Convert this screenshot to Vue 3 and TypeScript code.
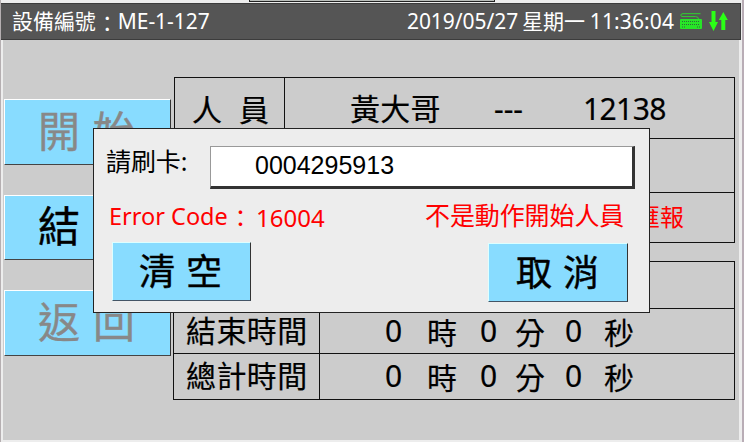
<script setup lang="ts">
interface Duration { label: string; values: { n: number; unit: string }[] }

const zero = () => [{ n: 0, unit: '時' }, { n: 0, unit: '分' }, { n: 0, unit: '秒' }]

const actions = [
  { label: '開始', enabled: false },
  { label: '結', enabled: true },
  { label: '返回', enabled: false },
]
const durations: Duration[] = [
  { label: '', values: [] },
  { label: '結束時間', values: zero() },
  { label: '總計時間', values: zero() },
]
const person = { name: '黃大哥', group: '---', id: '12138' }
const card = '0004295913'
</script>

<template>
  <div class="shell">
    <div class="outer-tab"></div>
    <header class="bar">
      <span class="device">設備編號<i class="colon">：</i>ME-1-127</span>
      <span class="date">2019/05/27</span>
      <span class="week">星期一</span>
      <span class="time">11:36:04</span>
      <svg class="keyboard" viewBox="0 0 22 16" width="22" height="16">
        <path d="M20.5 .7H3Q.8 .7 .8 2.2T3 3.6H15.5Q18.5 3.6 18.5 6" fill="none" stroke="#2fd32f" />
        <rect x="0" y="6" width="22" height="10" rx="1" fill="#27e527" />
        <path d="M2 8.5H20M2 11.5H20M2 14H5M17 14H20" stroke="#2f6b38" stroke-width="1" stroke-dasharray="1 1" />
      </svg>
      <svg class="arrows" viewBox="0 0 19 20" width="19" height="20">
        <path d="M2.5 0H6.5V11H9L4.5 20L0 11H2.5ZM12.3 19V9H9.8L14.3 1L18.8 9H16.3V19Z" fill="#2bff16" />
      </svg>
    </header>

    <main class="body">
      <nav class="actions">
        <button v-for="a in actions" :key="a.label" class="btn" :class="{ off: !a.enabled }">
          <span v-for="c in a.label" :key="c">{{ c }}</span>
        </button>
      </nav>
      <section class="tables">
        <div class="info">
          <div class="row person">
            <div class="who"><span>人</span><span>員</span></div>
            <div class="detail">
              <span class="name">{{ person.name }}</span>
              <span class="group">{{ person.group }}</span>
              <span class="id">{{ person.id }}</span>
            </div>
          </div>
          <div class="row"></div>
          <div class="row report">匯報</div>
        </div>
        <div class="times">
          <div v-for="d in durations" :key="d.label" class="trow">
            <div class="tlabel">{{ d.label }}</div>
            <div class="tval">
              <template v-for="v in d.values" :key="v.unit">
                <span class="n">{{ v.n }}</span><span class="u">{{ v.unit }}</span>
              </template>
            </div>
          </div>
        </div>
      </section>
    </main>

    <div class="dialog">
      <div class="scan">
        <label>請刷卡:</label>
        <div class="field">{{ card }}</div>
      </div>
      <div class="error">
        <span class="etitle">Error Code<i class="colon">：</i></span>
        <span class="ecode">16004</span>
        <span class="emsg">不是動作開始人員</span>
      </div>
      <div class="choices">
        <button class="btn small"><span>清</span><span>空</span></button>
        <button class="btn small cancel"><span>取</span><span>消</span></button>
      </div>
    </div>
  </div>
</template>

<style>
body { margin: 0; overflow: hidden; }
</style>

<style scoped>
.shell {
  position: relative;
  box-sizing: border-box;
  width: 744px;
  height: 442px;
  overflow: hidden;
  display: flex;
  flex-direction: column;
  background: #ededed;
  border-left: 1px solid #b5afb1;
  border-right: 2px solid #b9adb6;
  font-family: "Noto Sans", "Noto Sans CJK TC", sans-serif;
  color: #000;
  white-space: nowrap;
}
.outer-tab {
  box-sizing: border-box;
  flex: none;
  width: 246px;
  height: 2px;
  margin: 0 0 1px 248px;
  background: #b9bdb9;
  border: solid #222;
  border-width: 0 1px 1px;
}
.bar {
  box-sizing: border-box;
  flex: none;
  height: 37px;
  margin: 0 1px 0 -1px;
  display: flex;
  align-items: center;
  padding: 0 12px 1px 12px;
  background: #555;
  border: solid #3c3c3c;
  border-width: 1px 1px 1px 0;
  color: #fff;
  font-size: 21px;
  line-height: 30px;
}
.colon {
  display: inline-block;
  font-style: normal;
  line-height: 1;
  vertical-align: -2px;
  padding-left: 1px;
}
.device { flex: 1; letter-spacing: -.05px; }
.date { letter-spacing: -.05px; }
.week { margin: 0 5px 0 4px; letter-spacing: -.1px; }
.time { letter-spacing: .1px; }
.keyboard { margin: 0 7px 0 6px; }
.body {
  flex: 1;
  display: flex;
  align-items: flex-start;
  margin: 0 3px 2px 2px;
  background: #ccc;
}
.actions {
  display: flex;
  flex-direction: column;
  gap: 30px;
  padding: 59px 0 0 1px;
}
.btn {
  box-sizing: border-box;
  width: 167px;
  height: 65.5px;
  padding: 0 0 2px 33px;
  display: flex;
  align-items: center;
  gap: 13px;
  background: #88dcff;
  border: solid;
  border-width: 1px;
  border-color: #fff #333 #444 #fff;
  font-family: inherit;
  font-size: 42px;
  line-height: 50px;
  color: #000;
  -webkit-text-stroke: .4px;
}
.off { color: #888; }
.tables {
  flex: 1;
  padding: 37px 3px 0 3px;
}
.info {
  box-sizing: border-box;
  width: 561px;
  border: 1px solid #111;
  height: 166px;
  display: grid;
  grid-template-rows: 60px 54px 50px;
}
.row + .row { border-top: 1px solid #111; }
.person {
  display: flex;
  font-size: 30px;
  line-height: 40px;
  -webkit-text-stroke: .2px;
}
.who {
  box-sizing: border-box;
  width: 110px;
  display: flex;
  gap: 17px;
  padding: 12px 0 0 17px;
  border-right: 1px solid #111;
}
.detail { display: flex; padding: 11px 0 0 65px; }
.name { width: 144px; letter-spacing: .3px; }
.group { width: 89px; }
.id { letter-spacing: -.6px; }
.report {
  box-sizing: border-box;
  color: #f00;
  font-size: 24px;
  line-height: 47px;
  padding-left: 461px;
}
.times {
  box-sizing: border-box;
  width: 562px;
  margin: 18px 0 0 -1px;
  height: 139px;
  border: 1px solid #111;
  display: grid;
  grid-template-rows: 46px 45px 46px;
}
.trow { display: flex; font-size: 30px; -webkit-text-stroke: .2px; }
.trow + .trow { border-top: 1px solid #111; }
.tlabel {
  box-sizing: border-box;
  width: 146px;
  padding-left: 12px;
  border-right: 1px solid #111;
  letter-spacing: .4px;
  line-height: 43px;
}
.tval {
  display: grid;
  grid-template-columns: 42px 53px 35px 50px 39px 40px;
  padding-left: 65px;
}
.n { line-height: 43px; }
.u { line-height: 48px; }
.dialog {
  position: absolute;
  left: 92px;
  top: 128px;
  box-sizing: border-box;
  width: 557px;
  height: 185px;
  border: 1px solid #222;
  background: #ededed;
}
.scan { display: flex; padding: 17px 0 0 12px; }
label { width: 104px; font-size: 25px; line-height: 30px; letter-spacing: -.1px; }
.field {
  box-sizing: border-box;
  width: 425px;
  height: 43px;
  padding-left: 44px;
  background: #fff;
  border: solid;
  border-width: 1px 3px 3px 1px;
  border-color: #999 #333 #333 #999;
  font: 25px/37px "Liberation Sans", sans-serif;
}
.error {
  display: flex;
  height: 53px;
  padding: 10px 0 0 15px;
  box-sizing: border-box;
  color: #f00;
  font-size: 24px;
  line-height: 34px;
}
.etitle { width: 147px; font-size: 23.5px; }
.ecode { width: 169px; padding-top: 2px; }
.emsg { font-size: 25px; letter-spacing: -.1px; line-height: 32px; }
.choices { display: flex; justify-content: space-between; padding: 0 21px 0 18px; }
.small {
  width: 139px;
  height: 59px;
  gap: 11px;
  padding: 0 0 0 26px;
  font-size: 36px;
  line-height: 44px;
  border-color: #dff #333 #456 #dff;
}
.cancel { width: 140px; margin-top: 1px; padding-left: 27px; }
</style>
